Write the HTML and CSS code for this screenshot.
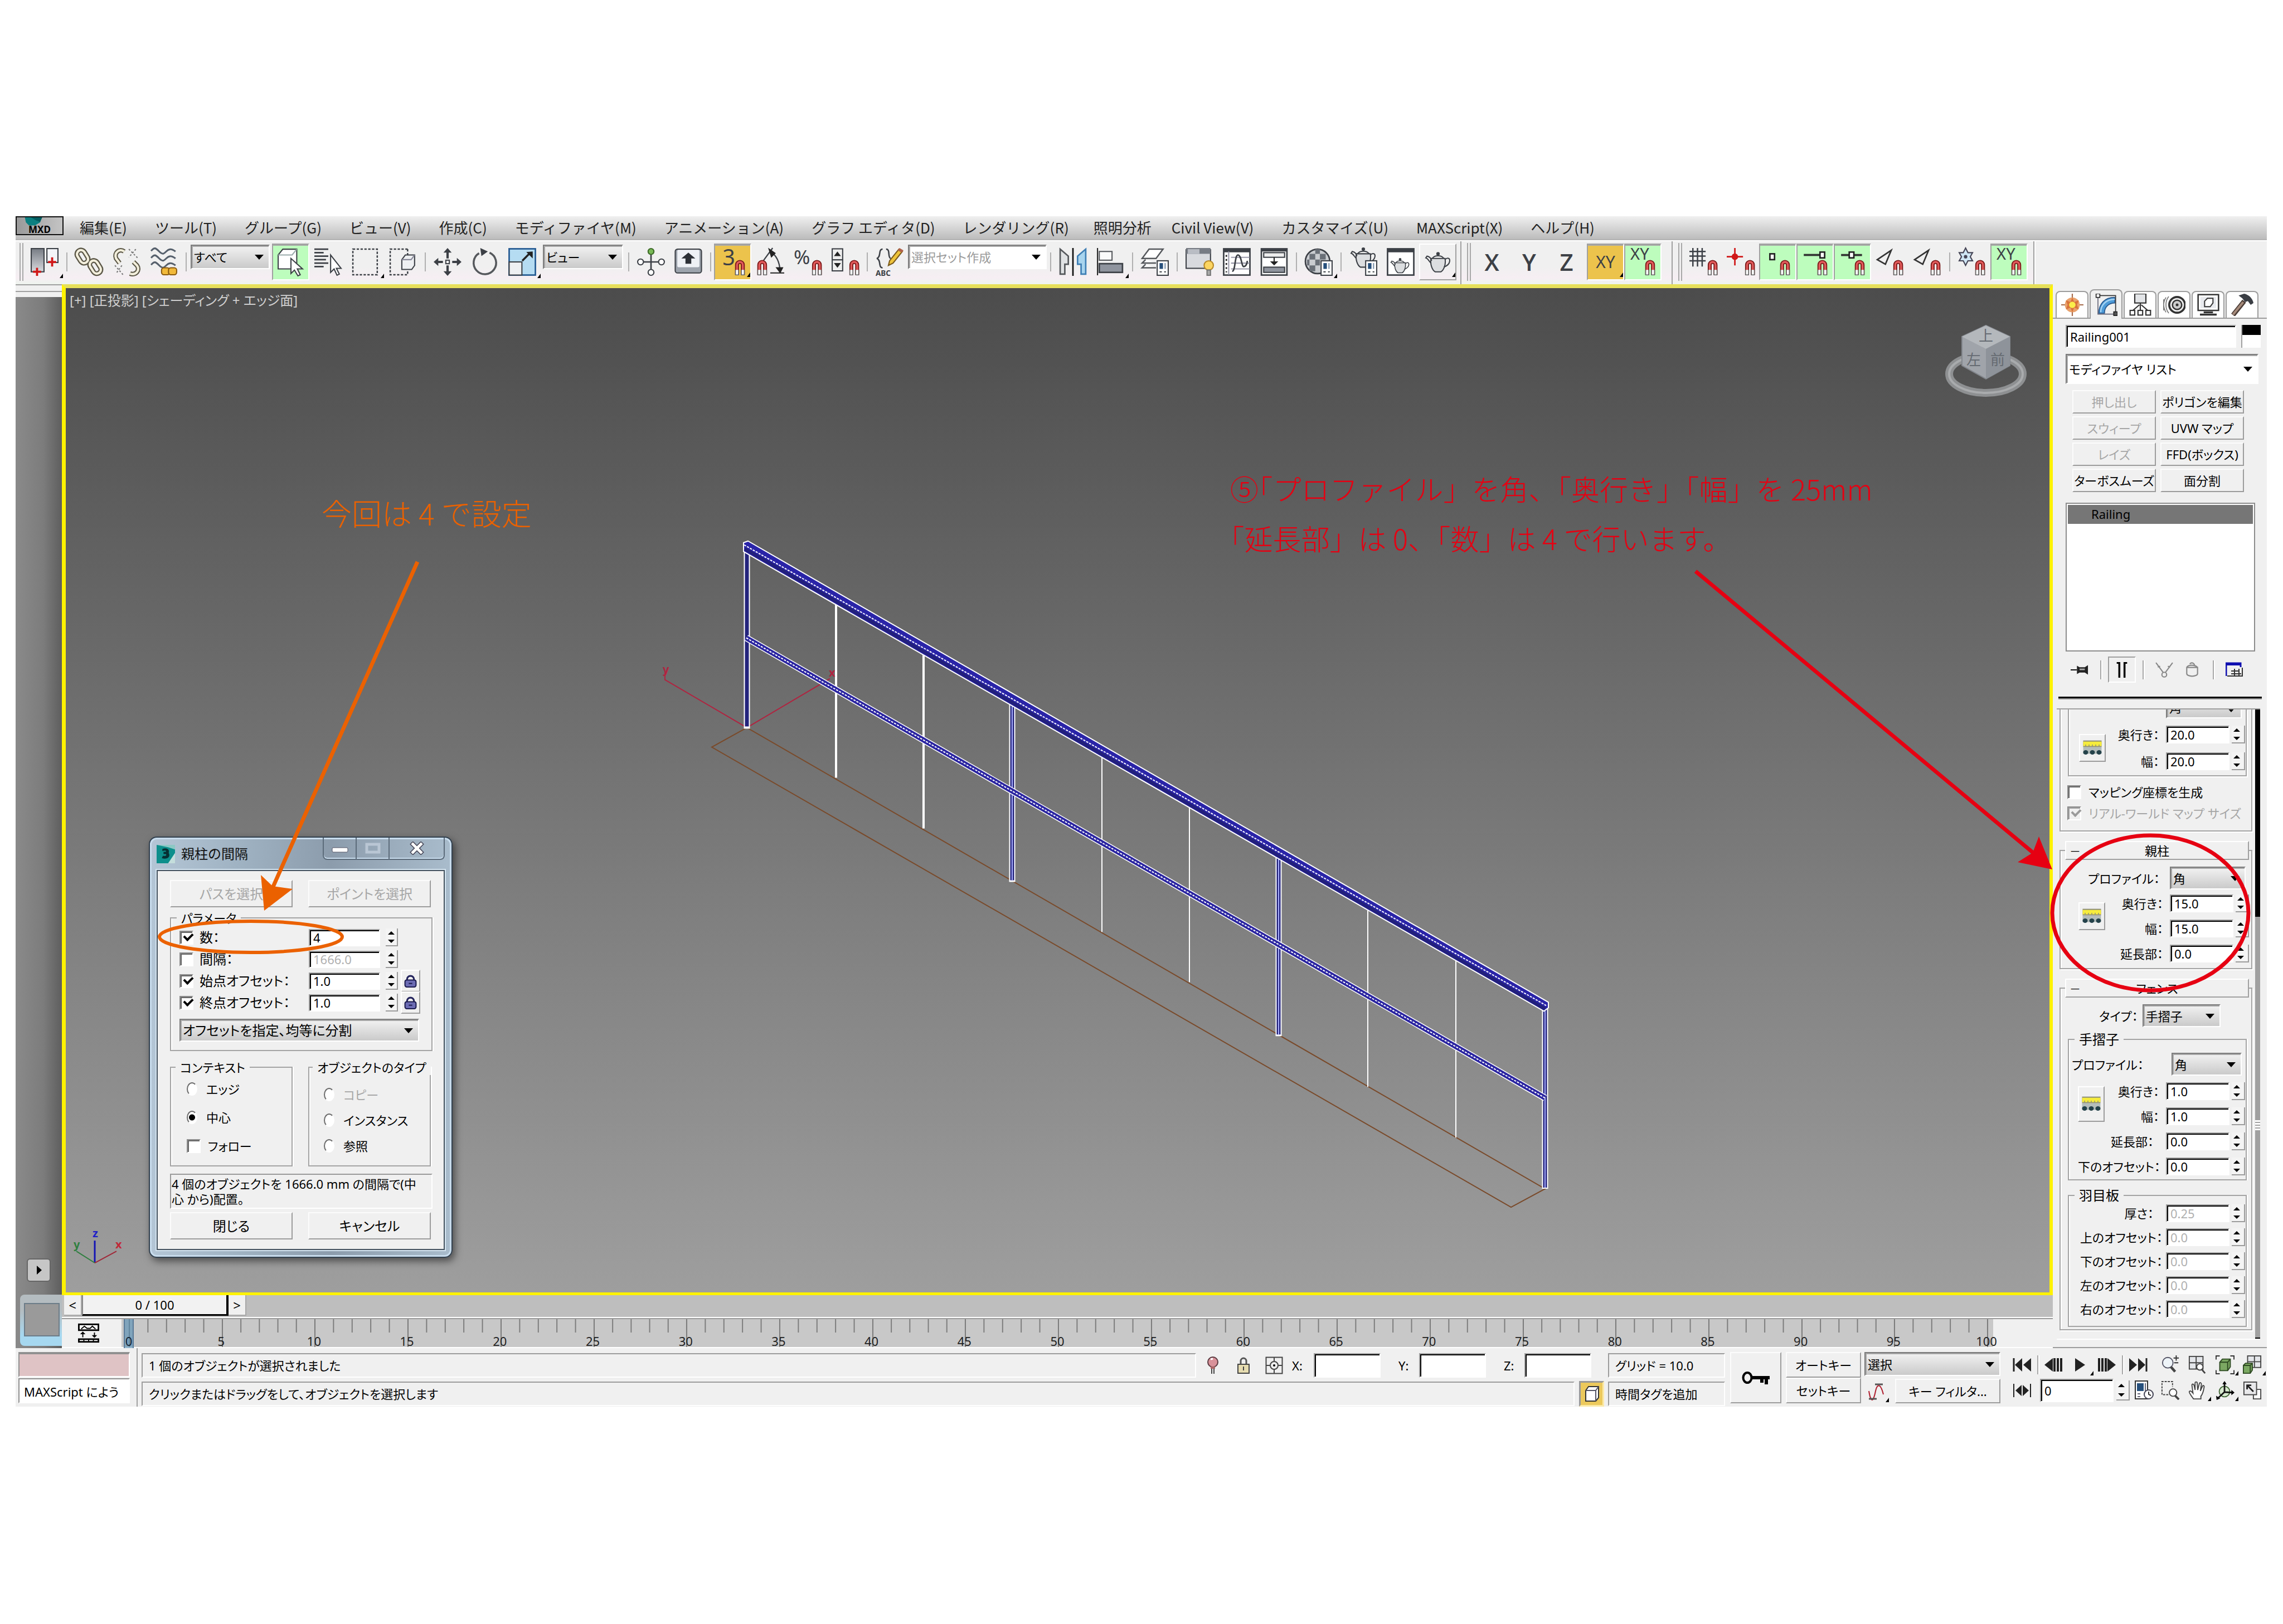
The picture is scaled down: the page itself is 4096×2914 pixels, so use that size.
FILE: index.html
```html
<!DOCTYPE html>
<html lang="ja">
<head>
<meta charset="utf-8">
<title>親柱の間隔</title>
<link rel="stylesheet" href="styles.css">
</head>
<body>
<svg class="defs" aria-hidden="true">
  <symbol id="magnet" viewBox="0 0 24 24">
    <path d="M15.5 23v-8.500a2.500 2.500 0 0 1 5 0V23" fill="none" stroke="#7d1a1a" stroke-width="3.400"/>
    <path d="M15.500 22v-7.500a2.500 2.500 0 0 1 5 0V22" fill="none" stroke="#e35b5b" stroke-width="1.600"/>
    <path d="M15.500 18.800V23.500M20.500 18.800V23.500" stroke="#666" stroke-width="3.400"/>
    <path d="M15.500 18.800V22.800M20.500 18.800V22.800" stroke="#fff" stroke-width="1.800"/>
  </symbol>
  <symbol id="dialogbadge" viewBox="0 0 24 24">
    <rect x="14" y="11" width="9.500" height="12.500" fill="#fff" stroke="#3c4046"/>
    <rect x="16" y="13" width="3" height="5" fill="#27507c"/>
    <path d="M20.800 13v5" stroke="#7a90a8"/><path d="M16 20.500h2M20 20.500h1.500" stroke="#3c4046"/>
  </symbol>
  <symbol id="ruler" viewBox="0 0 24 24">
    <rect x="1" y="2" width="22" height="9" fill="#8d8d7a"/><rect x="1" y="3.500" width="22" height="6" fill="#f6ec3c"/>
    <path d="M4 9.500v-2M8 9.500v-2M12 9.500v-2M16 9.500v-2M20 9.500v-2" stroke="#8d8d7a"/>
    <rect x="1" y="11" width="22" height="9" fill="#b4bdbb"/>
    <circle cx="4" cy="18" r="3" fill="#24424a"/><circle cx="12" cy="18" r="3" fill="#24424a"/><circle cx="20" cy="18" r="3" fill="#24424a"/>
  </symbol>
  <symbol id="padlock" viewBox="0 0 24 24">
    <path d="M6 11V9a6 6 0 0 1 12 0v2" fill="none" stroke="#23235c" stroke-width="3"/>
    <rect x="2.500" y="10" width="19" height="12" rx="3" fill="#6c6cb4" stroke="#1d1d50" stroke-width="2"/><path d="M9 16h6" stroke="#1d1d50" stroke-width="2"/>
  </symbol>
  <symbol id="teapot" viewBox="0 0 24 24">
    <path d="M6 9h12c1 5-1 10-3.500 11.500h-5C7 19 5 14 6 9z" fill="#dcdee0" stroke="#3c4046"/>
    <path d="M6 13C4.500 12 3.500 9 1.500 8.500l1-1.500C5 7.500 6 9 6.500 11M18 10c2-2 4.500-1.500 4 1.500-.300 2-2.500 4-5 5M7 9c2-3 8-3 10 0M12 6.500v-2.500" fill="none" stroke="#3c4046"/><circle cx="12" cy="5" r="1.500" fill="#3c4046"/>
  </symbol>
</svg>

<main class="app">
  <nav class="menubar">
    <button class="appbtn" aria-label="MXD"><svg viewBox="0 0 86 33"><path d="M14 0h34l-4 10-10 6h-12l-6-6z" fill="#0b7f80"/><path d="M26 0h22l-4 9-8-3z" fill="#045c60"/></svg><span>MXD</span></button>
    <ul class="menus">
      <li><a href="#">編集(E)</a></li><li><a href="#">ツール(T)</a></li><li><a href="#">グループ(G)</a></li><li><a href="#">ビュー(V)</a></li><li><a href="#">作成(C)</a></li><li><a href="#">モディファイヤ(M)</a></li><li><a href="#">アニメーション(A)</a></li><li><a href="#">グラフ エディタ(D)</a></li><li><a href="#">レンダリング(R)</a></li><li class="tight"><a href="#">照明分析</a></li><li><a href="#">Civil View(V)</a></li><li><a href="#">カスタマイズ(U)</a></li><li><a href="#">MAXScript(X)</a></li><li><a href="#">ヘルプ(H)</a></li>
    </ul>
  </nav>

  <div class="toolbars">
    <div class="bar main">
      <span class="grip"></span>
      <button class="tb" aria-label="選択範囲の整列"><svg viewBox="0 0 24 24"><defs><linearGradient id="gr" x1="0" y1="0" x2="0" y2="1"><stop offset="0" stop-color="#777c84"/><stop offset="1" stop-color="#d8dade"/></linearGradient></defs><rect x=".5" y=".5" width="11" height="20" fill="url(#gr)" stroke="#3c4046"/><rect x="14" y=".500" width="9.500" height="12" fill="#f4f5f8" stroke="#3c4046"/><path d="M5.500 17v7M2 20.500h7M18.500 8v8M15 12h7" stroke="#d01818" stroke-width="1.800"/></svg><i></i></button>
      <span class="sep"></span>
      <button class="tb" aria-label="リンク"><svg viewBox="0 0 24 24"><g fill="none" stroke="#5b5746" stroke-width="4.200"><rect x="2.500" y="1.500" width="7" height="12" rx="3.500" transform="rotate(-32 6 7)"/><rect x="13.500" y="10.500" width="7" height="12" rx="3.500" transform="rotate(-32 17 16)"/></g><g fill="none" stroke="#f3efdc" stroke-width="2"><rect x="2.500" y="1.500" width="7" height="12" rx="3.500" transform="rotate(-32 6 7)"/><rect x="13.500" y="10.500" width="7" height="12" rx="3.500" transform="rotate(-32 17 16)"/></g></svg></button>
      <button class="tb" aria-label="リンク解除"><svg viewBox="0 0 24 24"><g fill="none" stroke="#5b5746" stroke-width="4"><path d="M10 3C6 0 1 4 3 9l3 4"/><path d="M15 22c5 2 9-3 6-7l-3-3"/></g><g fill="none" stroke="#f3efdc" stroke-width="2"><path d="M10 3C6 0 1 4 3 9l3 4"/><path d="M15 22c5 2 9-3 6-7l-3-3"/></g><path d="M14 1l8 8M20 1l-6 7M2 15l7 8M8 15l-5 7" stroke="#777" stroke-dasharray="1.500 1.500"/></svg></button>
      <button class="tb" aria-label="スペース ワープにバインド"><svg viewBox="0 0 24 24"><path d="M1 2.500C4-1 5 0 8 3s4 2 6 0 4-3 8 0M1 8.500c3-3.500 4-2.500 7 .5s4 2 6 0 4-3 8 0M1 14.500c3-3.500 4-2.500 7 .5s4 2 6 0 4-3 8 0" fill="none" stroke="#56606c" stroke-width="1.500"/><rect x="10" y="17" width="7" height="6" rx="2" fill="#f1b93a" stroke="#8a5a10"/><rect x="16" y="17" width="7" height="6" rx="2" fill="#f1b93a" stroke="#8a5a10"/></svg></button>
      <span class="sep"></span>
      <span class="combo tool c-all"><select aria-label="選択フィルタ"><option>すべて</option></select></span>
      <button class="tb on" aria-label="オブジェクトを選択"><svg viewBox="0 0 24 24"><path d="M1 6l4-5h12v12l-3 5H1z" fill="#fff" stroke="#3c4046"/><path d="M1 6h12l4-5" fill="none" stroke="#9aa"/><path d="M12 9v13l3-3 3 5 2-1-2.500-5H22z" fill="#fff" stroke="#3c4046"/></svg></button>
      <button class="tb" aria-label="名前による選択"><svg viewBox="0 0 24 24"><path d="M0 1h12M0 4h8M0 7h12M0 10h10M0 13h12M0 16h8" stroke="#3c4046" stroke-width="1.300"/><path d="M14 6v15l3-3 2.500 5.500 2-1-2.500-5h4z" fill="#fff" stroke="#3c4046"/></svg></button>
      <button class="tb" aria-label="選択領域"><svg viewBox="0 0 24 24"><rect x="1" y="1" width="21" height="22" fill="none" stroke="#3c4046" stroke-width="1.200" stroke-dasharray="2 1.300"/></svg><i></i></button>
      <button class="tb" aria-label="窓/交差"><svg viewBox="0 0 24 24"><path d="M16 1H1v22h15v-4M16 1v5" fill="none" stroke="#3c4046" stroke-width="1.200" stroke-dasharray="2 1.300"/><path d="M11 10l3-4h8v9l-2.500 3.500H11z" fill="#eef0f2" stroke="#3c4046"/><path d="M11 10h8l3-4" fill="none" stroke="#889"/></svg></button>
      <span class="sep"></span>
      <button class="tb" aria-label="移動"><svg viewBox="0 0 24 24"><path d="M12 0l3.500 4H13v5h-2V4H8.500zM12 24l3.500-4H13v-5h-2v5H8.500zM0 12l4-3.500V11h4v2H4v2.500zM24 12l-4-3.500V11h-4v2h4v2.500z" fill="#3c4046"/><rect x="10.500" y="10.500" width="3" height="3" fill="#fff" stroke="#3c4046"/></svg></button>
      <button class="tb" aria-label="回転"><svg viewBox="0 0 24 24"><path d="M7 4.500A9.700 9.700 0 1 0 16 4" fill="none" stroke="#55585c" stroke-width="1.700"/><path d="M8 0l6.500 3L9 7z" fill="#3c4046"/></svg></button>
      <button class="tb" aria-label="スケール"><svg viewBox="0 0 24 24"><rect x=".700" y=".700" width="22.600" height="22.600" fill="#b5dcf2" stroke="#245a92" stroke-width="1.300"/><rect x=".700" y="12" width="11" height="11.300" fill="#eef0f2" stroke="#3c4046"/><path d="M12 11l7-7" stroke="#222" stroke-width="1.700"/><path d="M21 3v6l-5.500-5.500z" fill="#222"/></svg><i></i></button>
      <span class="combo tool c-view"><select aria-label="参照座標系"><option>ビュー</option></select></span>
      <span class="sep"></span>
      <button class="tb" aria-label="基点"><svg viewBox="0 0 24 24"><path d="M12 5v14M5 12h14" stroke="#3c4046" stroke-width="1.300"/><circle cx="12" cy="3" r="2.500" fill="#78b956" stroke="#3d6b27"/><circle cx="12" cy="21" r="2.500" fill="#fff" stroke="#3c4046"/><circle cx="3" cy="12" r="2.500" fill="#fff" stroke="#3c4046"/><circle cx="21" cy="12" r="2.500" fill="#fff" stroke="#3c4046"/></svg></button>
      <button class="tb" aria-label="マニピュレート"><svg viewBox="0 0 24 24"><rect x=".700" y="1" width="22.600" height="20.500" rx="2" fill="#9da4ad" stroke="#3c4046"/><rect x="2.500" y="1.500" width="19" height="15" rx="1" fill="#eef1f5"/><path d="M12 4l6 5h-3.500v4.500h-5V9H6z" fill="#2c3036"/></svg></button>
      <span class="sep"></span>
      <button class="tb gold" aria-label="3D スナップ"><svg viewBox="0 0 24 24"><text x="3" y="15" class="it" font-size="19">3</text><use href="#magnet"/></svg><i></i></button>
      <button class="tb" aria-label="角度スナップ"><svg viewBox="0 0 24 24"><path d="M6 11l8-11M12 3c5 3 8 9 8.500 17" fill="none" stroke="#3c4046" stroke-width="1.100"/><path d="M11 1l5 3.500-3 3zM17.500 17h5l-2 4zM12 21.500h12" fill="#222" stroke="#222"/><use href="#magnet" x="-13"/></svg></button>
      <button class="tb" aria-label="パーセント スナップ"><svg viewBox="0 0 24 24"><text x="0" y="14" class="it" font-size="17">%</text><use href="#magnet" x="2"/></svg></button>
      <button class="tb" aria-label="スピナー スナップ"><svg viewBox="0 0 24 24"><rect x="1" y=".700" width="9" height="9.500" fill="#eee" stroke="#3c4046"/><rect x="1" y="10.200" width="9" height="9.500" fill="#eee" stroke="#3c4046"/><path d="M5.500 3l3 4h-6zM5.500 17l3-4h-6z" fill="#222"/><use href="#magnet" x="2"/></svg></button>
      <span class="sep"></span>
      <button class="tb" aria-label="名前付き選択セット編集"><svg viewBox="0 0 24 24"><path d="M6 1C2 1 5 8 1 9c4 1 1 8 5 8M9 1c4 0 1 7 4 8" fill="none" stroke="#3c4046" stroke-width="1.200"/><path d="M11 15l1-4L20 1l3 2-8 10z" fill="#eec43a" stroke="#7a5a1a"/><path d="M19 2l1.500-2 3.500 2-1.500 2z" fill="#b0624a"/><text x="0" y="24" class="it b" font-size="6.500">ABC</text></svg></button>
      <span class="combo flat c-set"><select aria-label="選択セット"><option>選択セット作成</option></select></span>
      <span class="sep"></span>
      <button class="tb" aria-label="ミラー"><svg viewBox="0 0 24 24"><path d="M1 1l7 6v7H5v8.500H1z" fill="#e0e2e4" stroke="#55585c" stroke-width="1.300"/><path d="M23 1l-7 6v7h3v8.500h4z" fill="#a8d4ee" stroke="#3f7fb5" stroke-width="1.300"/><path d="M12 0v24" stroke="#111" stroke-width="1.300"/></svg></button>
      <button class="tb" aria-label="位置合わせ"><svg viewBox="0 0 24 24"><path d="M1 0v23.500" stroke="#222"/><rect x="2.500" y="3" width="11" height="7.500" fill="#fafafa" stroke="#55585c"/><rect x="2.500" y="13.500" width="20" height="7.500" fill="#8f949e" stroke="#3c4046" stroke-width="1.300"/></svg><i></i></button>
      <span class="sep"></span>
      <button class="tb" aria-label="レイヤ管理"><svg viewBox="0 0 24 24"><path d="M7 1h12l-6 8H1zM4 10l-3 3h12M4 14l-3 3h12" fill="#fff" stroke="#55585c" stroke-width="1.200"/><use href="#dialogbadge"/></svg></button>
      <span class="sep"></span>
      <button class="tb" aria-label="リボン"><svg viewBox="0 0 24 24"><rect x=".500" y="1.500" width="21" height="16" fill="#d8dade" stroke="#3c4046"/><rect x=".500" y="0" width="21" height="5" fill="#777c84"/><rect x="2" y="1" width="10" height="4" fill="#b9bdc4"/><circle cx="20" cy="15" r="4" fill="#fbd561" stroke="#b88a28"/><rect x="18.500" y="19" width="3" height="4.500" fill="#aaa" stroke="#777"/></svg></button>
      <button class="tb" aria-label="カーブ エディタ"><svg viewBox="0 0 24 24"><rect x=".700" y=".700" width="22.600" height="22.600" fill="#fff" stroke="#3c4046" stroke-width="1.300"/><rect x=".700" y=".700" width="22.600" height="3" fill="#3c4046"/><path d="M5 3v20M7 8h16M7 13h16M7 18h16" stroke="#99a"/><path d="M8 20c3 0 2-14 5-14s3 10 5 10 3-3 3-5" fill="none" stroke="#3c4046" stroke-width="1.300"/><path d="M3 6v15" stroke="#222" stroke-width="1.300" stroke-dasharray="1.500 2"/></svg></button>
      <button class="tb" aria-label="スケマティック ビュー"><svg viewBox="0 0 24 24"><rect x="1" y=".700" width="22" height="22.600" fill="#fff" stroke="#3c4046" stroke-width="1.300"/><path d="M1 2h22" stroke="#3c4046" stroke-width="2"/><rect x="3" y="4" width="18" height="4" fill="#eee" stroke="#3c4046"/><rect x="3" y="16.500" width="18" height="4.500" fill="#8f949e" stroke="#3c4046"/><path d="M12 8v5" stroke="#222"/><path d="M8.500 11.500h7L12 15z" fill="#222"/></svg></button>
      <span class="sep"></span>
      <button class="tb" aria-label="マテリアル エディタ"><svg viewBox="0 0 24 24"><circle cx="11" cy="11.500" r="10.500" fill="#c9ccd0" stroke="#3c4046" stroke-width="1.300"/><path d="M4 5h5v5H4zM13 5h5v5h-5zM9 10h4v5H9zM9 1h4v4H9zM2 10h2v5H2zM4 15h5v5H4z" fill="#6a7078"/><use href="#dialogbadge"/></svg><i></i></button>
      <span class="sep"></span>
      <button class="tb" aria-label="レンダリング設定"><svg viewBox="0 0 24 24"><use href="#teapot" y="-4"/><use href="#dialogbadge"/></svg></button>
      <button class="tb" aria-label="レンダー フレーム ウィンドウ"><svg viewBox="0 0 24 24"><rect x=".700" y=".700" width="22.600" height="22.600" fill="#fff" stroke="#3c4046" stroke-width="1.300"/><rect x=".700" y=".700" width="22.600" height="3" fill="#3c4046"/><use href="#teapot" x="2.500" y="6" width="18" height="18"/></svg></button>
      <button class="tb up" aria-label="レンダリング"><svg viewBox="0 0 24 24"><use href="#teapot"/></svg><i></i></button>
    </div>
    <div class="bar axes-bar">
      <span class="grip"></span>
      <button class="tb axis">X</button><button class="tb axis">Y</button><button class="tb axis">Z</button>
      <button class="tb gold xy">XY<i></i></button>
      <button class="tb on" aria-label="XY スナップ"><svg viewBox="0 0 24 24"><text x="1" y="10" class="it" font-size="14">XY</text><use href="#magnet"/></svg></button>
    </div>
    <div class="bar last">
      <span class="grip"></span>
      <button class="tb" aria-label="グリッド"><svg viewBox="0 0 24 24"><path d="M3 0v16M7 0v16M11 0v16M0 3h14M0 7h14M0 11h14" stroke="#3c4046" stroke-width="1.200"/><use href="#magnet" x="2"/></svg></button>
      <button class="tb" aria-label="基点"><svg viewBox="0 0 24 24"><path d="M7 0v15M0 7.500h14" stroke="#d01818" stroke-width="1.300"/><circle cx="7" cy="7.500" r="2.800" fill="#d01818"/><use href="#magnet" x="2"/></svg></button>
      <button class="tb on" aria-label="頂点"><svg viewBox="0 0 24 24"><rect x="5" y="5" width="4" height="5" fill="#fff" stroke="#222" stroke-width="1.300"/><use href="#magnet"/></svg></button>
      <button class="tb on" aria-label="端点"><svg viewBox="0 0 24 24"><path d="M2 6h15" stroke="#333" stroke-width="1.800"/><rect x="16" y="3.500" width="4" height="5" fill="#fff" stroke="#222" stroke-width="1.300"/><use href="#magnet"/></svg></button>
      <button class="tb on" aria-label="中点"><svg viewBox="0 0 24 24"><path d="M2 6h18" stroke="#333" stroke-width="1.800"/><rect x="9" y="3.500" width="4" height="5" fill="#fff" stroke="#222" stroke-width="1.300"/><use href="#magnet"/></svg></button>
      <button class="tb" aria-label="面"><svg viewBox="0 0 24 24"><path d="M13 2L1 10l7 4z" fill="none" stroke="#333" stroke-width="1.300"/><use href="#magnet" x="1"/></svg></button>
      <button class="tb" aria-label="エッジ"><svg viewBox="0 0 24 24"><path d="M13 2L1 10l7 4z" fill="none" stroke="#333" stroke-width="1.300"/><use href="#magnet" x="1"/></svg></button>
      <span class="sep"></span>
      <button class="tb" aria-label="フリーズ"><svg viewBox="0 0 24 24"><path d="M6.500 0l2 4h4l-2 3.500 2 3.500h-4l-2 4-2-4H1l2-3.500L1 4h3.500z" fill="#cfe6f4" stroke="#445"/><circle cx="6.500" cy="7.500" r="1.500" fill="#445"/><use href="#magnet" x="1"/></svg></button>
      <button class="tb on" aria-label="軸拘束"><svg viewBox="0 0 24 24"><text x="1" y="10" class="it" font-size="14">XY</text><use href="#magnet"/></svg></button>
    </div>
  </div>

  <div class="workspace">
    <aside class="strip">
      <div class="strip-top"></div>
      <button class="strip-play" aria-label="表示"><svg viewBox="0 0 12 16"><path d="M2 0l9 8-9 8z" fill="#000"/></svg></button>
      <div class="strip-view"><span></span></div>
    </aside>

    <section class="center">
      <div class="viewport">
        <p class="vlabel">[+] [正投影] [シェーディング + エッジ面]</p>
        <svg class="scene" viewBox="118 517 3559 1803" preserveAspectRatio="none">
          <g fill="none">
            <path d="M1340 1306L1277 1341L2711 2167L2772 2134Z" stroke="#7a4a2a" stroke-width="2"/>
            <path d="M1340 1306L1193 1220V1206M1340 1306L1489 1218" stroke="#b02440" stroke-width="2"/>
            <g stroke="#fff" stroke-width="4"><path d="M1500 1080V1396M1657 1172V1487"/></g>
            <g stroke="#fff" stroke-width="2"><path d="M1977 1355V1673M2134 1446V1763M2454 1630V1951M2612 1720V2042"/></g>
            <g stroke="#fff" stroke-width="11"><path d="M1340 980V1308M1816 1260V1583M2294 1530V1860M2772 1805V2134"/></g>
            <g stroke="#23237c" stroke-width="7"><path d="M1340 980V1304M1816 1260V1580M2294 1530V1857M2772 1805V2132"/></g>
            <path d="M1816 1260V1580M2294 1530V1857M2772 1805V2132" stroke="#aab0ff" stroke-width="2"/>
            <path d="M1339 1145L2772 1971" stroke="#fff" stroke-width="12"/>
            <path d="M1339 1145L2772 1971" stroke="#2a24a0" stroke-width="9"/>
            <path d="M1339 1145L2772 1971" stroke="#fff" stroke-width="2" stroke-dasharray="4 2"/>
            <path d="M1334 974l8-3L2778 1799v10l-8 6L1334 990z" fill="#2a24a8" stroke="#fff" stroke-width="2"/>
            <path d="M1336 985L2772 1811" stroke="#22207c" stroke-width="6"/>
            <path d="M1335 978L2774 1805" stroke="#fff" stroke-width="2" stroke-dasharray="4 2"/>
            <path d="M170 2267V2227" stroke="#1414b4" stroke-width="3"/><path d="M170 2267L137 2246" stroke="#2f7f3f" stroke-width="2"/><path d="M170 2267L209 2246" stroke="#a02838" stroke-width="2"/>
          </g>
          <g class="axes"><text x="166" y="2221" fill="#2020c8">z</text><text x="132" y="2241" fill="#2f7f3f">y</text><text x="207" y="2241" fill="#c02838">x</text><text x="1189" y="1208" fill="#b02440">y</text><text x="1487" y="1214" fill="#b02440">x</text></g>
          <g class="cube">
            <ellipse cx="3563" cy="671" rx="66" ry="34" fill="none" stroke="#8e9092" stroke-width="14"/>
            <ellipse cx="3563" cy="671" rx="66" ry="34" fill="none" stroke="#a9abad" stroke-width="4"/>
            <path d="M3563 584l43 20v52l-43 24-43-24v-52z" fill="#a0a4aa" stroke="#83878d" stroke-width="2"/>
            <path d="M3563 584l43 20-43 22-43-22z" fill="#b4b8bc"/><path d="M3606 604v52l-43 24v-54z" fill="#8e939a"/>
            <g fill="#666b72" font-size="26"><text x="3550" y="612">上</text><text x="3528" y="655">左</text><text x="3571" y="655">前</text></g>
          </g>
        </svg>

        <form class="dialog" aria-label="親柱の間隔">
          <header class="titlebar">
            <svg viewBox="0 0 32 32" class="logo"><rect width="32" height="32" fill="#0d8f8c"/><path d="M0 0h32v8L20 4z" fill="#8cc8c4"/><path d="M20 32h12V14z" fill="#c4dedc"/><path d="M10 7c8-3 13 1 11 7 4 7-3 12-12 9l2-4c5 1 7-1 5-3h-4v-4h4c1-2-1-3-6-1z" fill="#062f33"/></svg>
            <h2>親柱の間隔</h2>
            <div class="winbtns">
              <button type="button" aria-label="最小化"><svg viewBox="0 0 32 24"><rect x="2" y="11" width="28" height="8" rx="2" fill="#fff" stroke="#556"/></svg></button>
              <button type="button" aria-label="最大化"><svg viewBox="0 0 32 24"><rect x="5" y="5" width="22" height="14" fill="none" stroke="#b9c6d4" stroke-width="5"/></svg></button>
              <button type="button" class="x" aria-label="閉じる"><svg viewBox="0 0 32 24"><path d="M6 2l20 20M26 2L6 22" stroke="#445" stroke-width="8"/><path d="M7 3l18 18M25 3L7 21" stroke="#fff" stroke-width="5"/></svg></button>
            </div>
          </header>
          <div class="client">
            <div class="two"><button type="button" class="btn" disabled>パスを選択</button><button type="button" class="btn" disabled>ポイントを選択</button></div>
            <fieldset class="params"><legend>パラメータ</legend>
              <div class="prow"><input type="checkbox" id="d1" checked><label for="d1">数：</label><input class="num" aria-label="数" value="4"><span class="spin"><button type="button" aria-label="増"></button><button type="button" aria-label="減"></button></span></div>
              <div class="prow"><input type="checkbox" id="d2"><label for="d2">間隔：</label><input class="num" aria-label="間隔" value="1666.0" disabled><span class="spin"><button type="button" aria-label="増"></button><button type="button" aria-label="減"></button></span></div>
              <div class="prow"><input type="checkbox" id="d3" checked><label for="d3">始点オフセット：</label><input class="num" aria-label="始点オフセット" value="1.0"><span class="spin"><button type="button" aria-label="増"></button><button type="button" aria-label="減"></button></span><button type="button" class="lock" aria-label="ロック"><svg viewBox="0 0 24 24"><use href="#padlock"/></svg></button></div>
              <div class="prow"><input type="checkbox" id="d4" checked><label for="d4">終点オフセット：</label><input class="num" aria-label="終点オフセット" value="1.0"><span class="spin"><button type="button" aria-label="増"></button><button type="button" aria-label="減"></button></span><button type="button" class="lock" aria-label="ロック"><svg viewBox="0 0 24 24"><use href="#padlock"/></svg></button></div>
              <span class="combo c-off"><select aria-label="オフセット"><option>オフセットを指定、均等に分割</option></select></span>
            </fieldset>
            <div class="two groups">
              <fieldset class="ctx"><legend>コンテキスト</legend>
                <div><input type="radio" name="c" id="r1"><label for="r1">エッジ</label></div>
                <div><input type="radio" name="c" id="r2" checked><label for="r2">中心</label></div>
                <div><input type="checkbox" id="r3"><label for="r3">フォロー</label></div>
              </fieldset>
              <fieldset class="typ"><legend>オブジェクトのタイプ</legend>
                <div><input type="radio" name="t" id="t1" disabled><label for="t1">コピー</label></div>
                <div><input type="radio" name="t" id="t2"><label for="t2">インスタンス</label></div>
                <div><input type="radio" name="t" id="t3"><label for="t3">参照</label></div>
              </fieldset>
            </div>
            <p class="info">4 個のオブジェクトを 1666.0 mm の間隔で(中<br>心 から)配置。</p>
            <div class="two"><button type="button" class="btn">閉じる</button><button type="button" class="btn">キャンセル</button></div>
          </div>
        </form>
      </div>

      <div class="slider">
        <button aria-label="前のフレーム">&lt;</button><button class="thumb">0 / 100</button><button aria-label="次のフレーム">&gt;</button>
      </div>
      <div class="trackbar">
        <button class="mini" aria-label="ミニ カーブ エディタ"><svg viewBox="0 0 40 36"><rect x="1.500" y="1.500" width="37" height="11" fill="#fff" stroke="#000" stroke-width="3"/><path d="M6 10l6-5 5 4h6l4-4 6 5" fill="none" stroke="#000" stroke-width="2"/><path d="M9 26v-8M31 17v8" stroke="#000" stroke-width="2"/><path d="M4 20l5-5 5 5zM26 22l5 5 5-5z"/><rect x="1.500" y="29.500" width="37" height="5" fill="#fff" stroke="#000" stroke-width="3"/><path d="M11 29v6M20 29v6M29 29v6" stroke="#000" stroke-width="2"/></svg></button>
        <ol class="track">
          <li class="cur"><span>0</span></li><li><span>5</span></li><li><span>10</span></li><li><span>15</span></li><li><span>20</span></li><li><span>25</span></li><li><span>30</span></li><li><span>35</span></li><li><span>40</span></li><li><span>45</span></li><li><span>50</span></li><li><span>55</span></li><li><span>60</span></li><li><span>65</span></li><li><span>70</span></li><li><span>75</span></li><li><span>80</span></li><li><span>85</span></li><li><span>90</span></li><li><span>95</span></li><li class="end"><span>100</span></li>
        </ol>
      </div>
    </section>

    <aside class="panel">
      <div class="tabs">
        <button aria-label="作成"><svg viewBox="0 0 24 24"><path d="M12 0v24M0 12h24" stroke="#a66a4a" stroke-width="1.300"/><circle cx="12" cy="12" r="8" fill="#e9a26c"/><path d="M12 4l2 5 5-2-2 5 2 5-5-2-2 5-2-5-5 2 2-5-2-5 5 2z" fill="#d9733a"/><circle cx="12" cy="12" r="3.500" fill="#fbee4a"/></svg></button>
        <button class="active" aria-label="修正"><svg viewBox="0 0 24 24"><path d="M3 2h19v20" fill="none" stroke="#333"/><path d="M3 2v20h18" fill="none" stroke="#667"/><path d="M4 21C4 11 10 4 21 4v6c-6 0-11 4-11 11z" fill="#4d9bd8" stroke="#28578c"/><path d="M6 20C6 12 12 6 21 6" fill="none" stroke="#a7d3f2" stroke-width="1.500"/><rect x="1" y="0" width="4" height="4" fill="#fff" stroke="#222"/><rect x="20" y="19.500" width="4" height="4" fill="#555" stroke="#222"/></svg></button>
        <button aria-label="階層"><svg viewBox="0 0 24 24"><rect x="6" y="0" width="12" height="10" fill="#e3e5e8" stroke="#333" stroke-width="1.300"/><path d="M12 10v8M11 12l-7 6M13 12l7 6" stroke="#333" stroke-width="1.300"/><rect x="1" y="18" width="5" height="5" fill="#fff" stroke="#333" stroke-width="1.300"/><rect x="9.500" y="18" width="5" height="5" fill="#fff" stroke="#333" stroke-width="1.300"/><rect x="18" y="18" width="5" height="5" fill="#fff" stroke="#333" stroke-width="1.300"/></svg></button>
        <button aria-label="モーション"><svg viewBox="0 0 24 24"><circle cx="15" cy="12" r="8.500" fill="#eee" stroke="#333" stroke-width="2.200"/><circle cx="15" cy="12" r="5" fill="#ccc" stroke="#333" stroke-width="1.500"/><circle cx="15" cy="12" r="1.500" fill="#333"/><path d="M6 3c-4 5-4 13 0 18M3 4c-3 5-3 11 0 16M.800 6c-1.500 4-1.500 8 0 12" fill="none" stroke="#777"/></svg></button>
        <button aria-label="表示"><svg viewBox="0 0 24 24"><rect x="1" y="1" width="22" height="17" fill="#fff" stroke="#333" stroke-width="1.500"/><rect x="3.500" y="3.500" width="17" height="12" fill="#e8eaee"/><path d="M8 8l3-3h6v5l-3 4H8z" fill="#fff" stroke="#333" stroke-width="1.200"/><path d="M7 20h10M3 22.500h18" stroke="#333" stroke-width="2"/></svg></button>
        <button aria-label="ユーティリティ"><svg viewBox="0 0 24 24"><path d="M2 23L14 8" stroke="#4a3c36" stroke-width="5"/><path d="M2 22.500L13 9" stroke="#a58a7a" stroke-width="2.500"/><path d="M8 2l6-2c5 1 9 5 10 10l-3 2-3-4-3 1-3-4z" fill="#3a3e44"/></svg></button>
      </div>
      <div class="modify">
        <div class="namerow"><input class="name" aria-label="名前" value="Railing001"><button class="swatch" aria-label="カラー"></button></div>
        <span class="combo white c-mod"><select aria-label="モディファイヤ リスト"><option>モディファイヤ リスト</option></select></span>
        <div class="modbtns">
          <button class="btn" disabled>押し出し</button><button class="btn">ポリゴンを編集</button>
          <button class="btn" disabled>スウィープ</button><button class="btn">UVW マップ</button>
          <button class="btn" disabled>レイズ</button><button class="btn">FFD(ボックス)</button>
          <button class="btn">ターボスムーズ</button><button class="btn">面分割</button>
        </div>
        <ul class="stack"><li>Railing</li></ul>
        <div class="stacktools">
          <button aria-label="ピン"><svg viewBox="0 0 34 24"><path d="M0 12h12" stroke="#000" stroke-width="2"/><path d="M12 4v16l5-3h10l6 4V3l-6 4H17z" fill="#222"/><path d="M17 11h10" stroke="#aaa" stroke-width="3"/></svg></button><span class="vs"></span>
          <button class="down" aria-label="最終結果を表示"><svg viewBox="0 0 24 24"><path d="M4 1h4v23M20 1h-4v23" fill="none" stroke="#000" stroke-width="3"/></svg></button><span class="vs"></span>
          <button aria-label="一意にする"><svg viewBox="0 0 30 26"><path d="M1 1l12 16M29 1L17 17M4 8l4-1M25 8l-4-1" stroke="#888" stroke-width="2"/><circle cx="15" cy="21" r="4" fill="none" stroke="#888" stroke-width="2"/></svg></button>
          <button aria-label="削除"><svg viewBox="0 0 24 26"><path d="M3 9h18v10c0 6-18 6-18 0zM3 9c2-5 14-5 18 0M8 3c4-4 9 0 8 4" fill="none" stroke="#888" stroke-width="2"/></svg></button><span class="vs"></span>
          <button aria-label="設定"><svg viewBox="0 0 32 26"><path d="M1 24V1h26v7" fill="none" stroke="#1010b0" stroke-width="3"/><path d="M1 3h26" stroke="#1010b0" stroke-width="4"/><path d="M3 24h27V9" fill="none" stroke="#333" stroke-width="2"/><path d="M10 15h14M10 20h18M16 11v12M24 11v12" stroke="#333" stroke-width="2"/></svg></button>
        </div>
      </div>
      <hr class="divider">
      <div class="rollouts">
        <div class="rollcol">
          <section class="rollup first">
            <div class="open">
              <span class="combo cut"><select aria-label="下部プロファイル"><option>角</option></select></span>
              <div class="fields f1">
                <button class="ruler" aria-label="間隔"><svg viewBox="0 0 24 24" preserveAspectRatio="none"><use href="#ruler"/></svg></button>
                <label for="p1">奥行き：</label><input class="num" id="p1" value="20.0"><span class="spin"><button aria-label="増"></button><button aria-label="減"></button></span>
                <label for="p2">幅：</label><input class="num" id="p2" value="20.0"><span class="spin"><button aria-label="増"></button><button aria-label="減"></button></span>
              </div>
            </div>
            <div class="chk"><input type="checkbox" id="m1"><label for="m1">マッピング座標を生成</label></div>
            <div class="chk"><input type="checkbox" id="m2" checked disabled><label for="m2">リアル-ワールド マップ サイズ</label></div>
          </section>

          <section class="rollup">
            <h3><button><b>—</b>親柱</button></h3>
            <div class="line prof2"><label for="s2">プロファイル：</label><span class="combo"><select id="s2"><option>角</option></select></span></div>
            <div class="fields f2">
              <button class="ruler" aria-label="間隔"><svg viewBox="0 0 24 24" preserveAspectRatio="none"><use href="#ruler"/></svg></button>
              <label for="p3">奥行き：</label><input class="num" id="p3" value="15.0"><span class="spin"><button aria-label="増"></button><button aria-label="減"></button></span>
              <label for="p4">幅：</label><input class="num" id="p4" value="15.0"><span class="spin"><button aria-label="増"></button><button aria-label="減"></button></span>
              <label for="p5" class="wide">延長部：</label><input class="num" id="p5" value="0.0"><span class="spin"><button aria-label="増"></button><button aria-label="減"></button></span>
            </div>
          </section>

          <section class="rollup fence">
            <h3><button><b>—</b>フェンス</button></h3>
            <div class="line type"><label for="s3">タイプ：</label><span class="combo"><select id="s3"><option>手摺子</option></select></span></div>
            <fieldset><legend>手摺子</legend>
              <div class="line prof3"><label for="s4">プロファイル：</label><span class="combo"><select id="s4"><option>角</option></select></span></div>
              <div class="fields f3">
                <button class="ruler" aria-label="間隔"><svg viewBox="0 0 24 24" preserveAspectRatio="none"><use href="#ruler"/></svg></button>
                <label for="p6">奥行き：</label><input class="num" id="p6" value="1.0"><span class="spin"><button aria-label="増"></button><button aria-label="減"></button></span>
                <label for="p7">幅：</label><input class="num" id="p7" value="1.0"><span class="spin"><button aria-label="増"></button><button aria-label="減"></button></span>
                <label for="p8" class="wide ext">延長部：</label><input class="num" id="p8" value="0.0"><span class="spin"><button aria-label="増"></button><button aria-label="減"></button></span>
                <label for="p9" class="wide">下のオフセット：</label><input class="num" id="p9" value="0.0"><span class="spin"><button aria-label="増"></button><button aria-label="減"></button></span>
              </div>
            </fieldset>
            <fieldset class="second"><legend>羽目板</legend>
              <div class="fields f4">
                <label for="q1" class="wide ext">厚さ：</label><input class="num" id="q1" value="0.25" disabled><span class="spin"><button aria-label="増"></button><button aria-label="減"></button></span>
                <label for="q2" class="wide">上のオフセット：</label><input class="num" id="q2" value="0.0" disabled><span class="spin"><button aria-label="増"></button><button aria-label="減"></button></span>
                <label for="q3" class="wide">下のオフセット：</label><input class="num" id="q3" value="0.0" disabled><span class="spin"><button aria-label="増"></button><button aria-label="減"></button></span>
                <label for="q4" class="wide">左のオフセット：</label><input class="num" id="q4" value="0.0" disabled><span class="spin"><button aria-label="増"></button><button aria-label="減"></button></span>
                <label for="q5" class="wide">右のオフセット：</label><input class="num" id="q5" value="0.0" disabled><span class="spin"><button aria-label="増"></button><button aria-label="減"></button></span>
              </div>
            </fieldset>
          </section>
        </div>
        <div class="scroll"><span></span></div>
      </div>
    </aside>
  </div>

  <footer class="status">
    <div class="listener"><input class="macro" aria-label="マクロ レコーダ"><input aria-label="MAXScript リスナー" value="MAXScript によう"></div>
    <div class="messages">
      <div class="mrow">
        <output class="msg grow">1 個のオブジェクトが選択されました</output>
        <button class="sicon" aria-label="分離"><svg viewBox="0 0 24 32"><circle cx="12" cy="10" r="9" fill="#d9929a" stroke="#5a3a40" stroke-width="2"/><path d="M8 18h8v4H8z" fill="#a66"/><path d="M10 22v9M14 22v9" stroke="#444" stroke-width="2"/><path d="M8 5l4-1" stroke="#fff" stroke-width="3"/></svg></button>
        <button class="sicon" aria-label="選択ロック"><svg viewBox="0 0 24 32"><path d="M7 15V8a5 5 0 0 1 10 0v7" fill="none" stroke="#555" stroke-width="3"/><rect x="2" y="14" width="20" height="16" fill="#e6dcb0" stroke="#444" stroke-width="2"/><path d="M12 18v7" stroke="#444" stroke-width="2"/></svg></button>
        <button class="sicon" aria-label="絶対モード"><svg viewBox="0 0 32 32"><rect x="1.500" y="1.500" width="29" height="29" fill="none" stroke="#444" stroke-width="2"/><path d="M16 1v7M16 24v7M1 16h7M24 16h7" stroke="#444" stroke-width="2"/><circle cx="16" cy="16" r="7" fill="none" stroke="#444" stroke-width="2"/><circle cx="16" cy="16" r="2"/></svg></button>
        <label for="cx">X:</label><input class="num coord" id="cx"><label for="cy">Y:</label><input class="num coord" id="cy"><label for="cz">Z:</label><input class="num coord" id="cz">
      </div>
      <div class="mrow two2">
        <output class="msg grow">クリックまたはドラッグをして、オブジェクトを選択します</output>
        <button class="tagcube" aria-label="アダプティブ"><svg viewBox="0 0 28 30"><path d="M3 9l5-7h18v20l-5 6H3z" fill="#fff" stroke="#333" stroke-width="2"/><path d="M3 9h18v19M21 9l5-7" fill="none" stroke="#556" stroke-width="2"/></svg></button>
      </div>
    </div>
    <div class="fieldscol"><output class="msg">グリッド = 10.0</output><output class="msg">時間タグを追加</output></div>
    <button class="btn key" aria-label="キー設定"><svg viewBox="0 0 50 26"><ellipse cx="10" cy="13" rx="7.500" ry="9" fill="none" stroke="#000" stroke-width="4"/><path d="M18 13h32M44 13v12M36 13v9" stroke="#000" stroke-width="6"/></svg></button>
    <div class="keys"><button class="btn">オートキー</button><button class="btn">セットキー</button></div>
    <div class="keysel">
      <span class="combo"><select aria-label="選択"><option>選択</option></select></span>
      <div class="kf"><button class="plain" aria-label="接線"><svg viewBox="0 0 34 34"><path d="M3 16c5 30 10 10 12 0s8-18 14 6" fill="none" stroke="#b02030" stroke-width="2"/><path d="M3 30h14M14 4h14" stroke="#555" stroke-width="3"/></svg><i></i></button><button class="btn">キー フィルタ...</button></div>
    </div>
    <div class="play">
      <div class="prw">
        <button class="plain" aria-label="先頭"><svg viewBox="0 0 34 24"><path d="M2 0v24" stroke="#222" stroke-width="3"/><path d="M17 0v24L4 12zM33 0v24L19 12z" fill="#222"/></svg></button><span class="vs"></span>
        <button class="plain" aria-label="前"><svg viewBox="0 0 34 24"><path d="M16 0v24L1 12z" fill="#222"/><path d="M19 0v24M25 0v24M31 0v24" stroke="#222" stroke-width="4"/></svg></button>
        <button class="plain" aria-label="再生"><svg viewBox="0 0 34 24"><path d="M8 0v24l18-12z" fill="#222"/></svg><i></i></button>
        <button class="plain" aria-label="次"><svg viewBox="0 0 34 24"><path d="M18 0v24l15-12z" fill="#222"/><path d="M3 0v24M9 0v24M15 0v24" stroke="#222" stroke-width="4"/></svg></button><span class="vs"></span>
        <button class="plain" aria-label="最後"><svg viewBox="0 0 34 24"><path d="M32 0v24" stroke="#222" stroke-width="3"/><path d="M17 0v24l13-12zM1 0v24l14-12z" fill="#222"/></svg></button>
      </div>
      <div class="prw">
        <button class="plain" aria-label="キー モード"><svg viewBox="0 0 34 24"><path d="M2 0v24M32 0v24" stroke="#222" stroke-width="2"/><path d="M16 2v20L5 12zM18 2v20l11-10z" fill="#222"/></svg></button>
        <input class="num frame" aria-label="現在のフレーム" value="0"><span class="spin"><button aria-label="増"></button><button aria-label="減"></button></span>
        <button class="plain tc" aria-label="時間設定"><svg viewBox="0 0 36 36"><rect x="2" y="1" width="22" height="32" fill="#fff" stroke="#333" stroke-width="2"/><rect x="5" y="5" width="12" height="14" fill="#27507c"/><path d="M20 5v14M6 24h5M6 29h5" stroke="#667" stroke-width="2"/><circle cx="26" cy="25" r="8" fill="#fff" stroke="#445" stroke-width="2"/><path d="M26 20v5l4 2" fill="none" stroke="#333" stroke-width="2"/></svg></button>
      </div>
    </div>
    <div class="nav">
      <button class="plain" aria-label="ズーム"><svg viewBox="0 0 36 36"><circle cx="13" cy="14" r="10" fill="#eef4f8" stroke="#556" stroke-width="2"/><path d="M19 22l8 9" stroke="#444" stroke-width="5"/><path d="M24 5h10M29 0v10M25 14h8" stroke="#333" stroke-width="2"/></svg></button>
      <button class="plain" aria-label="すべてズーム"><svg viewBox="0 0 36 36"><rect x="2" y="2" width="26" height="24" fill="#e4e6ea" stroke="#444" stroke-width="2"/><path d="M15 2v24M2 14h26" stroke="#444" stroke-width="2"/><circle cx="22" cy="22" r="6" fill="#fff" stroke="#444" stroke-width="2"/><path d="M26 27l6 7" stroke="#444" stroke-width="3"/></svg></button>
      <button class="plain" aria-label="全範囲ズーム"><svg viewBox="0 0 36 36"><path d="M1 8V1h7M28 1h7v7M35 28v7h-7M8 35H1v-7" fill="none" stroke="#333" stroke-width="2"/><path d="M8 13l5-6h15v15l-5 7H8z" fill="#7ba862" stroke="#2e4a22" stroke-width="2"/><path d="M8 13h15v16M23 13l5-6" fill="none" stroke="#2e4a22" stroke-width="2"/></svg><i></i></button>
      <button class="plain" aria-label="全ビューをズーム"><svg viewBox="0 0 36 36"><rect x="9" y="1" width="25" height="22" fill="#e4e6ea" stroke="#444" stroke-width="2"/><path d="M22 1v22M9 12h25" stroke="#444" stroke-width="2"/><path d="M1 19l4-4h13v13l-4 6H1z" fill="#7ba862" stroke="#2e4a22" stroke-width="2"/><path d="M1 19h13v15M14 19l4-4" fill="none" stroke="#2e4a22" stroke-width="2"/></svg><i></i></button>
      <button class="plain" aria-label="領域ズーム"><svg viewBox="0 0 36 36"><path d="M14 26H2V1h20v10" fill="none" stroke="#444" stroke-width="2" stroke-dasharray="4 2"/><circle cx="23" cy="22" r="7" fill="#fff" stroke="#444" stroke-width="2"/><path d="M27 28l7 7" stroke="#444" stroke-width="4"/></svg></button>
      <button class="plain" aria-label="パン"><svg viewBox="0 0 36 36"><path d="M10 34C5 27 1 22 2 20s4-1 7 3L7 8c0-3 3-3 4 0l2 9 0-13c0-3 4-3 4 0l1 13 3-12c1-3 4-2 4 1l-2 13 4-9c1-3 4-1 3 2-1 7-2 12-6 17v5z" fill="#fff" stroke="#444" stroke-width="2"/></svg><i></i></button>
      <button class="plain" aria-label="軌道"><svg viewBox="0 0 36 36"><circle cx="17" cy="20" r="10" fill="#d8ead0" stroke="#456a3a" stroke-width="2"/><path d="M17 2v19l16 1M17 21L4 33" fill="none" stroke="#111" stroke-width="3"/><path d="M13 6l4-6 4 6zM30 17l6 5-6 5zM1 28l1 8 7-3z"/></svg><i></i></button>
      <button class="plain" aria-label="最大化切り替え"><svg viewBox="0 0 36 36"><path d="M22 16h12v18H20v-8" fill="#fff" stroke="#444" stroke-width="2"/><rect x="2" y="2" width="24" height="24" fill="#e8e8ea" stroke="#444" stroke-width="2"/><path d="M20 20L9 9M8 16V8h8" fill="none" stroke="#222" stroke-width="3"/></svg></button>
    </div>
  </footer>
</main>

<div class="notes">
  <svg viewBox="0 0 4096 2914" preserveAspectRatio="none" aria-hidden="true">
    <g fill="none" stroke="#eb6100"><path d="M749 1008L486 1600" stroke-width="7"/><ellipse cx="450" cy="1681" rx="164" ry="28" stroke-width="6"/></g>
    <path d="M474 1634L468 1570L489 1590L525 1595Z" fill="#eb6100"/>
    <g fill="none" stroke="#e60012"><path d="M3042 1025L3650 1532" stroke-width="7"/><ellipse cx="3858" cy="1638" rx="176" ry="139" stroke-width="7"/></g>
    <path d="M3682 1560L3620 1547L3647 1530L3658 1501Z" fill="#e60012"/>
  </svg>
  <p class="note orange">今回は 4 で設定</p>
  <p class="note red">⑤<span class="half">「</span>プロファイル」を角、「奥行き」「幅」を 25mm<br><span class="half">「</span>延長部」は 0、「数」は 4 で行います。</p>
</div>
</body>
</html>
```

FILE: styles.css
```css
* { box-sizing: border-box; }
body {
  margin: 0; position: relative; min-height: 100vh; background: #fff; color: #000;
  display: flex; flex-direction: column; padding: 388px 29px 390px 28px;
  font-family: "Noto Sans", "Noto Sans CJK JP", sans-serif; font-size: 22px; line-height: 28px;
  font-feature-settings: "palt";
}
button, input, select { font: inherit; font-feature-settings: inherit; color: inherit; margin: 0; }
button { padding: 0; border: 0; background: none; display: flex; align-items: center; justify-content: center; position: relative; white-space: nowrap; }
ul, ol, p, h2, h3 { margin: 0; padding: 0; list-style: none; font-weight: 400; font-size: inherit; }
svg { display: block; }
.defs { position: absolute; width: 0; height: 0; }
i { position: absolute; right: 0; bottom: 4px; border: solid transparent; border-width: 8px 0 0 6px; border-bottom: 8px solid #000; border-top: 0; }

.app { flex: 1; display: flex; flex-direction: column; background: #f0f0f0; }

/* menu bar */
.menubar { display: flex; height: 43px; background: linear-gradient(#f0f0f0, #bcbcbc); border-bottom: 2px solid #b4b4b4; font-family: "Noto Sans CJK JP", sans-serif; }
.appbtn { width: 86px; height: 34px; background: linear-gradient(90deg, #9a9a9a, #c4c4c4); border: 2px solid #111; align-items: flex-end; }
.appbtn svg { position: absolute; inset: 0; width: 100%; height: 100%; }
.appbtn span { position: relative; font: 700 17px/16px "Noto Sans", sans-serif; }
.menus { display: flex; gap: 50px; padding-left: 29px; font-size: 26px; line-height: 40px; font-feature-settings: normal; }
.menus a { color: #222; text-decoration: none; white-space: nowrap; }
.menus .tight { margin: 0 -14px 0 -6px; }

/* tool bars */
.toolbars { display: flex; height: 79px; border-top: 2px solid #fff; }
.bar { display: flex; align-items: center; padding-bottom: 3px; border-right: 2px solid #a0a0a0; box-shadow: 2px 0 0 #fff; background: linear-gradient(#f0f0f0 60%, #f6eef3 85%, #eef4ee); }
.bar.main { padding-right: 7px; }
.bar.axes-bar { padding-right: 18px; }
.bar.last { padding-right: 10px; }
.grip { width: 7px; height: 68px; margin: 0 4px 0 7px; border: solid #a8a8a8; border-width: 0 2px; }
.bar + .bar .grip { margin: 0 4px 0 10px; }
.tb { width: 67px; height: 66px; }
.tb svg { width: 50px; height: 50px; overflow: visible; }
.sep { width: 13px; height: 34px; background: linear-gradient(#b0b0b0, #b0b0b0) center / 2px 100% no-repeat; }
.tb.on, .tb.gold { border: 2px solid; border-color: #a0a0a0 #fff #fff #a0a0a0; background: #bdfdbd; box-shadow: inset 0 2px 0 #a8a8a8; }
.tb.gold { background: #ecc34c; }
.tb.up { border: 2px solid; border-color: #fff #a0a0a0 #a0a0a0 #fff; }
.it { font-family: "Noto Sans", sans-serif; fill: #3c4046; }
.it.b { font-weight: 700; }
.axis { font: 600 42px/50px "Open Sans", sans-serif; color: #3c4046; }
.xy { margin-left: 3px; font-size: 30px; color: #3c4046; }

.combo { position: relative; display: flex; height: 41px; }
.combo select { appearance: none; width: 100%; height: 100%; border: 2px solid; border-color: #7c7c7c #fff #fff #7c7c7c; border-radius: 0; padding: 0 4px; background: linear-gradient(#f2f2f2, #cacaca); box-shadow: inset 2px 2px 0 #a8a8a8; opacity: 1; }
.combo::after { content: ""; position: absolute; right: 11px; top: 50%; margin-top: -4px; border: 8px solid transparent; border-top: 9px solid #000; border-bottom: 0; pointer-events: none; }
.combo.white select, .combo.flat select { background: #fff; }
.combo.tool, .combo.flat { height: 44px; align-self: flex-start; margin-top: 6px; }
.combo.flat select { color: #9a9a9a; }
.c-all { width: 142px; margin: 0 4px 0 2px; }
.combo.c-view { width: 144px; margin-right: 3px; margin-left: 4px; }
.c-set { width: 249px; }

/* work area */
.workspace { flex: 1; display: flex; min-height: 0; }
.strip { width: 83px; display: flex; flex-direction: column; background: linear-gradient(90deg, #8a8a8a, #7c7c7c 60%, #5e5e5e); }
.strip-top { height: 23px; background: #f0f0f0; border-top: 2px solid #a0a0a0; box-shadow: inset 0 10px 0 #f0f0f0, inset 0 12px 0 #a0a0a0; }
.strip-play { width: 43px; height: 42px; margin: auto 20px 23px; background: #c6c6c6; border: 2px solid #666; border-radius: 6px; }
.strip-play svg { width: 12px; height: 18px; }
.strip-view { margin: 0 0 4px 8px; height: 92px; border-radius: 8px 0 0 8px; background: linear-gradient(#b4bcc0 30%, #a6d8f0 80%); padding: 15px 4px 17px 7px; }
.strip-view span { display: block; height: 100%; background: #9a9a9a; border: 2px solid #6c7c88; }
.center { flex: 1; display: flex; flex-direction: column; min-width: 0; }
.viewport { flex: 1; position: relative; border: solid #fff200; border-width: 7px 6px 5px 7px; border-top-color: #e6e05a; background: linear-gradient(#4c4c4c, #9e9e9e); }
.vlabel { position: absolute; left: 7px; top: 8px; color: #d0d0d0; font-size: 24px; white-space: nowrap; }
.scene { position: absolute; inset: 0; width: 100%; height: 100%; }
.axes { font: 700 20px "Noto Sans", sans-serif; }

/* spacing dialog */
.dialog { position: absolute; left: 149px; top: 984px; width: 545px; padding: 0 12px 12px; border: 2px solid #33414f; border-radius: 14px; background: linear-gradient(90deg, #b4c6d6, #9fb2c2 30%, #8c9cac 60%, #a9bccc); box-shadow: inset 0 0 0 3px #c8dced, 4px 6px 14px rgba(0,0,0,.5); }
.titlebar { display: flex; height: 58px; align-items: center; }
.logo { width: 33px; height: 33px; }
.titlebar h2 { flex: 1; padding-left: 11px; font-size: 24px; font-feature-settings: normal; color: #111; }
.winbtns { display: flex; align-self: flex-start; height: 40px; border: 2px solid #5c6b7a; border-top: 0; border-radius: 0 0 8px 8px; box-shadow: inset 0 -2px 0 #c8dced; }
.winbtns button { width: 59px; border-right: 2px solid #5c6b7a; }
.winbtns .x { width: 97px; border: 0; }
.winbtns svg { width: 32px; height: 24px; }
.client { background: #f0f0f0; border: 2px solid #44525f; outline: 2px solid #d4e4f0; padding: 16px 20px 17px 22px; }
.two { display: grid; grid-template-columns: 220px 220px; column-gap: 28px; }
.btn { border: 2px solid; border-color: #fcfcfc #9c9c9c #9c9c9c #fcfcfc; background: #f0f0f0; }
.btn:disabled { color: #a6a6a6; }
.client .btn { height: 49px; font-size: 24px; }
fieldset { margin: 0; min-width: 0; border: 2px solid #a4a4a4; padding: 0; box-shadow: inset 2px 0 0 #fff, 2px 0 0 #fff; }
legend { padding: 0 8px; margin-left: 10px; line-height: 28px; white-space: nowrap; }
.params legend { margin-left: -5px; }
.params { margin-top: 5px; padding: 6px 20px 15px 15px; display: flex; flex-direction: column; gap: 9px; }
.prow { display: flex; height: 30px; align-items: center; }
.prow label { flex: 1; padding-left: 11px; white-space: nowrap; font-size: 24px; }
.prow .num { width: 128px; margin-right: 10px; height: 31px; }
.prow .spin { width: 22px; margin-right: 5px; padding-right: 0; }
.lock { width: 35px; height: 40px; border: 2px solid; border-color: #fff #a0a0a0 #a0a0a0 #fff; }
.lock svg { width: 25px; height: 25px; }
.prow:nth-child(2) .spin, .prow:nth-child(3) .spin { margin-right: 40px; }
.c-off { width: 430px; margin-top: 5px; font-size: 24px; }
.groups { margin-top: 15px; align-items: stretch; }
.groups fieldset { display: flex; flex-direction: column; padding: 11px 0 21px 28px; gap: 23px; }
.groups .typ { padding: 21px 0 20px 26px; gap: 18px; }
.groups legend { margin-left: -20px; }
.groups fieldset > div { display: flex; align-items: center; height: 28px; gap: 16px; }
.groups input[type=checkbox] { margin-right: -3px; }
.info { margin-top: 13px; height: 63px; border: 2px solid; border-color: #9a9a9a #fff #fff #9a9a9a; padding: 3px 1px; line-height: 27px; white-space: nowrap; }
.info + .two { margin-top: 6px; }

input[type=checkbox] { appearance: none; flex: none; width: 25px; height: 25px; border: 2px solid; border-color: #8c8c8c #fff #fff #8c8c8c; background: #fff; box-shadow: inset 2px 2px 0 #666; position: relative; }
input[type=checkbox]:checked::after { content: ""; position: absolute; left: 6px; top: 2px; width: 12px; height: 7px; border: solid #000; border-width: 0 0 4px 4px; transform: rotate(-45deg); }
input[type=checkbox]:disabled { background: #f0f0f0; box-shadow: inset 2px 2px 0 #a0a0a0; }
input[type=checkbox]:disabled::after { border-color: #9a9a9a; }
input[type=checkbox]:disabled + label, input[type=radio]:disabled + label { color: #a6a6a6; }
input[type=radio] { appearance: none; width: 19px; height: 24px; flex: none; border-radius: 50%; border: 2px solid; border-color: #6c6c6c #fff #fff #6c6c6c; background: #fff; }
input[type=radio]:checked { background: radial-gradient(circle, #000 5px, #fff 6px); }

.num, .name { border: 2px solid; border-color: #a0a0a0 #fff #fff #a0a0a0; border-radius: 0; background: #fff; box-shadow: inset 2px 2px 0 #000; padding: 0 6px; min-width: 0; height: 32px; }
.num:disabled { color: #b0b0b0; background: #fff; }
.spin { display: flex; flex-direction: column; width: 24px; height: 32px; padding-right: 4px; border: solid #9c9c9c; border-width: 0 2px 2px 0; background: #f4f4f4; }
.spin button { flex: 1; }
.spin button::after { content: ""; border: 6px solid transparent; border-bottom: 6px solid #000; border-top: 0; }
.spin button + button::after { border-bottom: 0; border-top: 6px solid #000; }

/* time slider */
.slider { display: flex; height: 41px; padding-left: 4px; background: #bebebe; border-bottom: 2px solid #fff; }
.slider button { width: 32px; height: 37px; background: #f0f0f0; border-right: 2px solid #a8a8a8; border-bottom: 2px solid #a8a8a8; font-size: 24px; }
.slider .thumb { width: 263px; background: #f2f2f2; border: solid #000; border-width: 0 4px 3px 0; border-left: 2px solid #888; font-size: 22px; }
.trackbar { display: flex; height: 54px; border-top: 2px solid #9a9a9a; border-bottom: 2px solid #fff; padding: 0 118px 0 2px; }
.mini { width: 105px; }
.mini svg { width: 38px; height: 36px; margin-right: 14px; }
.track { flex: 1; display: flex; padding-left: 13px; margin-right: -11px; padding-right: 9px; background: #c8c8c8; }
.track li { flex: 1; min-width: 0; background: linear-gradient(90deg, #7c7c7c 2px, transparent 2px) 0 0 / 20% 24px repeat-x, linear-gradient(#7c7c7c, #7c7c7c) 0 0 / 2px 100% no-repeat; }
.track .end { flex: none; width: 2px; }
.track span { display: block; width: 60px; margin: 28px 0 0 -31px; text-align: center; line-height: 22px; color: #222; }
.track .cur span { width: 18px; margin: 0 0 0 -9px; height: 52px; padding-top: 28px; background: rgba(80,140,180,.6); border: 2px solid #5a7a98; border-width: 0 2px; color: #123; }

/* command panel */
.panel { width: 384px; display: flex; flex-direction: column; border-bottom: 2px solid #9c9c9c; }
.tabs { display: flex; gap: 2px; margin-top: 9px; padding-left: 5px; height: 53px; border-bottom: 2px solid #9c9c9c; align-items: flex-end; }
.tabs button { width: 59px; height: 48px; background: #fff; border: 2px solid #9c9c9c; border-bottom: 0; border-radius: 8px 8px 0 0; }
.tabs .active { height: 53px; margin-bottom: -2px; background: #f0f0f0; }
.tabs svg { width: 40px; height: 40px; }
.modify { display: flex; flex-direction: column; padding: 11px 0 0 23px; }
.namerow { display: flex; gap: 9px; }
.name { width: 306px; height: 41px; }
.swatch { width: 35px; height: 41px; background: linear-gradient(#000 18px, #fff 18px); border: solid #a0a0a0; border-width: 0 0 0 2px; }
.c-mod { width: 346px; height: 54px; margin-top: 11px; }
.modbtns { display: grid; grid-template-columns: 150px 150px; grid-auto-rows: 42px; gap: 5px 8px; margin: 11px 0 0 12px; }
.stack { margin-top: 19px; width: 340px; height: 267px; border: 2px solid #8c8c8c; background: #fff; padding: 2px; }
.stack li { height: 34px; background: #767676; padding-left: 42px; line-height: 32px; }
.stacktools { display: flex; align-items: center; height: 47px; margin-top: 9px; }
.stacktools button { width: 50px; height: 47px; }
.stacktools svg { width: 32px; height: 28px; }
.stacktools .down { border: 2px solid; border-color: #a0a0a0 #fff #fff #a0a0a0; }
.vs { width: 2px; height: 34px; background: #a8a8a8; box-shadow: 2px 0 0 #fff; margin: 0 3px; }
.stacktools .vs { margin: 0 12px; }
.divider { margin: 25px 9px 0 10px; border: 0; border-top: 3px solid #000; border-bottom: 2px solid #999; }
.rollouts { flex: 1; margin: 16px 12px 13px 7px; border-top: 2px solid #a0a0a0; border-bottom: 2px solid #fff; display: flex; min-height: 0; }
.rollcol { flex: 1; min-width: 0; padding-left: 5px; }
.scroll { width: 9px; margin-left: 5px; background: #a0a0a0; border-top: 372px solid #000; padding-top: 365px; border-bottom: 2px solid #000; }
.scroll span { display: block; height: 20px; background: repeating-linear-gradient(#fff 0 3px, #a0a0a0 3px 5px); }
.rollup { border: 2px solid #a4a4a4; box-shadow: inset 2px 0 0 #fff, 2px 2px 0 #fff; margin-top: 33px; }
.rollup.first { margin: 0; border-top: 0; height: 219px; }
.rollup h3 { margin: -18px 4px 12px 8px; }
.rollup h3 button { width: 100%; height: 34px; border: 2px solid; border-color: #fff #a0a0a0 #a0a0a0 #fff; background: #f0f0f0; }
.rollup h3 b { position: absolute; left: 8px; font-weight: 400; font-size: 16px; }
.rollup legend { font-size: 24px; }
.open { margin: 0 8px 0 13px; height: 120px; border: 2px solid #a4a4a4; border-top: 0; box-shadow: inset 2px 0 0 #fff, 2px 2px 0 #fff; }
.cut { height: 16px; width: 136px; margin-left: auto; margin-right: 7px; overflow: hidden; align-items: flex-end; }
.cut select { height: 41px; flex: none; }
.cut::after { top: 0; margin-top: -4px; }
.fields { display: grid; grid-template-columns: 50px 1fr 114px 24px; column-gap: 4px; row-gap: 12px; align-items: center; }
.fields label { text-align: right; padding-right: 8px; white-space: nowrap; }
.fields .wide { grid-column: 1 / 3; }
.fields .ext { padding-right: 18px; }
.ruler { grid-row: 1 / 3; width: 48px; height: 50px; border: 2px solid; border-color: #fff #9c9c9c #9c9c9c #fff; background: #f0f0f0; }
.ruler svg { width: 36px; height: 32px; }
.f1 { margin: 13px 1px 0 18px; row-gap: 16px; }
.f2 { margin: 9px 4px 10px 32px; row-gap: 13px; }
.f3 { margin: 12px 1px 7px 16px; row-gap: 13px; }
.f3 .ruler { height: 64px; }
.f4 { margin: 2px 1px 14px 16px; row-gap: 11px; }
.f4 label { padding-right: 2px; }
.chk { display: flex; align-items: center; gap: 13px; margin: 16px 0 0 12px; height: 24px; white-space: nowrap; }
.chk + .chk { margin-top: 14px; }
.line { display: flex; align-items: center; white-space: nowrap; }
.prof2 { margin-left: 49px; justify-content: space-between; margin-right: 10px; }
.prof2 .combo { width: 136px; }
.type { margin-left: 69px; gap: 8px; }
.type .combo { width: 140px; }
.rollup fieldset { margin: 8px 8px 0 13px; }
.rollup .second { margin: 13px 8px 4px 13px; }
.prof3 { margin: 10px 7px 0 5px; justify-content: space-between; }
.prof3 .combo { width: 126px; }

/* status */
.status { display: flex; height: 105px; padding: 7px 2px 0 5px; }
.listener { width: 214px; padding-right: 14px; border-right: 2px solid #a0a0a0; display: flex; flex-direction: column; gap: 2px; margin-top: -7px; padding-top: 7px; }
.listener input { width: 200px; height: 45px; border: 2px solid; border-color: #909090 #fff #fff #909090; border-radius: 0; padding: 0 8px; background: #fff; }
.listener .macro { background: #dfc3c5; border-top-width: 4px; }
.messages { flex: 1; display: flex; flex-direction: column; gap: 7px; margin: 2px 7px 0 7px; min-width: 0; }
.mrow { display: flex; align-items: center; height: 44px; }
.mrow label { width: 37px; }
.mrow label + input { margin-right: 32px; }
.mrow input:last-child { margin-right: 23px; }
.msg { display: flex; align-items: center; height: 44px; border: 2px solid; border-color: #9c9c9c #fff #fff #9c9c9c; padding-left: 11px; white-space: nowrap; }
.grow { flex: 1; }
.sicon { width: 40px; height: 44px; }
.sicon + .sicon { margin-left: 15px; }
.mrow .sicon:first-of-type { margin-left: 10px; }
.sicon + label { margin-left: 12px; width: 39px; }
.sicon svg { height: 32px; width: 32px; }
.coord { width: 120px; height: 44px; }
.two2 .grow { margin-right: 8px; }
.tagcube { width: 45px; height: 46px; background: #ecc95c; border: 3px solid #fbe9a8; border-left-color: #999; border-top-color: #999; }
.tagcube svg { width: 28px; height: 32px; }
.fieldscol { width: 210px; display: flex; flex-direction: column; gap: 7px; margin-top: 2px; }
.key { width: 92px; height: 92px; margin: 0 8px 0 9px; }
.key svg { width: 50px; height: 26px; }
.keys { width: 135px; display: grid; grid-auto-rows: 46px; }
.keysel { width: 244px; margin: 0 15px 0 6px; }
.keysel .combo { height: 43px; }
.kf { display: flex; margin-top: 5px; height: 44px; justify-content: space-between; }
.kf .btn { width: 189px; }
.kf .plain { width: 44px; }
.kf svg { width: 34px; height: 34px; }
.play { width: 265px; }
.prw { display: flex; align-items: center; height: 46px; }
.plain { width: 48px; height: 46px; }
.prw svg { width: 34px; height: 24px; }
.frame { width: 132px; height: 42px; margin: 0 5px 0 8px; }
.prw .spin { height: 36px; }
.prw .tc { width: 44px; margin-left: 4px; }
.prw .tc svg { width: 36px; height: 36px; }
.nav { display: grid; grid-template-columns: repeat(4, 49px); grid-auto-rows: 46px; }
.nav .plain { width: 49px; }
.nav svg { width: 34px; height: 34px; }

/* tutorial call-outs over the window */
.notes { position: absolute; inset: 0; pointer-events: none; }
.notes svg { width: 100%; height: 100%; position: absolute; inset: 0; }
.note { position: absolute; font-family: "Noto Sans CJK JP", sans-serif; font-weight: 300; line-height: 89px; white-space: nowrap; font-feature-settings: normal; }
.half { font-feature-settings: "halt"; }
.orange { left: 577px; top: 875px; font-size: 54px; color: #eb6100; }
.red { left: 2207px; top: 832px; font-size: 51px; color: #e60012; }
```
